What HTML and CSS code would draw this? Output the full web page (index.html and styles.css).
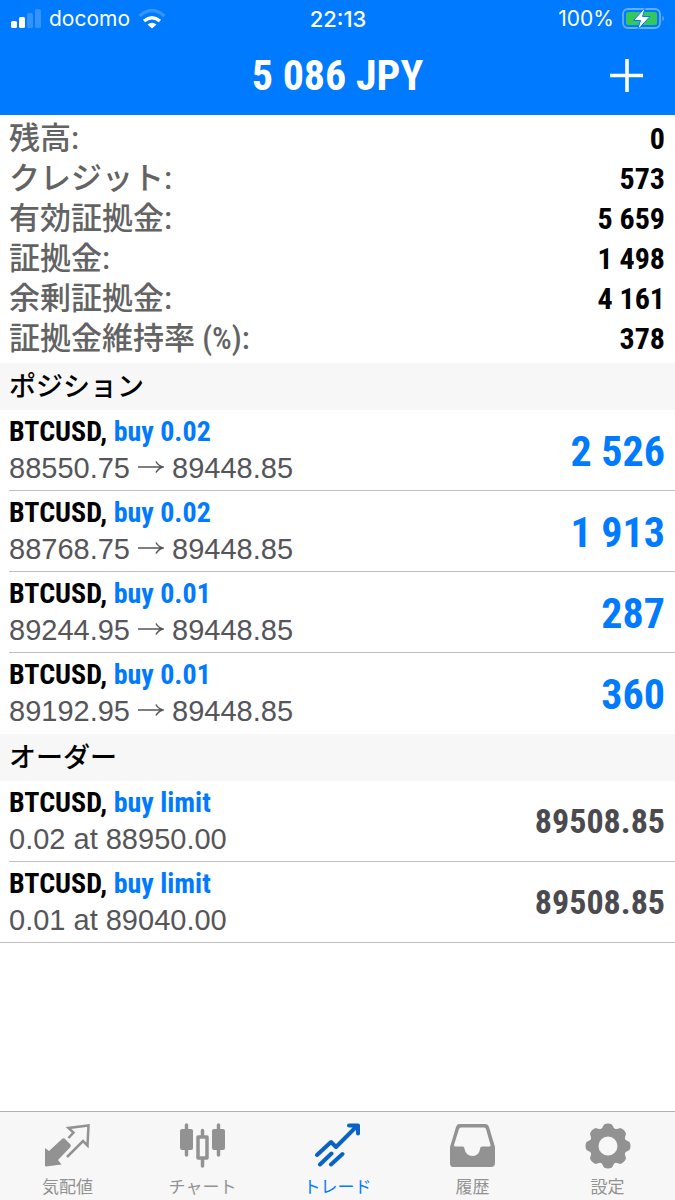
FILE: index.html
```html
<!DOCTYPE html>
<html lang="ja">
<head>
<meta charset="UTF-8" />
<meta name="viewport" content="width=device-width, initial-scale=1" />
<title>トレード</title>
<link rel="stylesheet" href="styles.css">
</head>
<body>

<header class="header">
  <div class="statusbar">
    <div class="carrier">
      <svg width="30" height="20" viewBox="0 0 30 20" fill="#fff">
        <rect x="0" y="12" width="6" height="7" rx="1.5"/>
        <rect x="8" y="8" width="6" height="11" rx="1.5"/>
        <rect x="16" y="4" width="6" height="15" rx="1.5" opacity=".2"/>
        <rect x="24" y="0" width="6" height="19" rx="1.5" opacity=".2"/>
      </svg>
      <span>docomo</span>
      <svg width="28" height="20" viewBox="0 0 28 20" fill="none" stroke="#fff">
        <path d="M1.500 7Q14 -4 26.500 7" stroke-width="3.500" opacity=".2"/>
        <path d="M6 12Q14 5.500 22 12" stroke-width="3.500"/>
        <path d="M14 19.500L9.500 15.500Q14 12 18.500 15.500Z" fill="#fff" stroke="none"/>
      </svg>
    </div>
    <time class="clock">22:13</time>
    <div class="battery">
      <span>100%</span>
      <svg width="43" height="24" viewBox="0 0 43 24">
        <rect x="1" y="2" width="37" height="19" rx="5" fill="none" stroke="#fff" stroke-width="1.800" opacity=".4"/>
        <rect x="4" y="5" width="31" height="13" rx="2.500" fill="#34c759"/>
        <path d="M40.500 8.500q2.500 3 0 6z" fill="#fff" opacity=".45"/>
        <path d="M23.500 0L11.500 13.500H18.500L15.500 23L28 9.500H20.500Z" fill="#fff" stroke="#007aff" stroke-width="1" stroke-linejoin="round"/>
      </svg>
    </div>
  </div>
  <div class="titlebar">
    <h1 class="title">5 086 JPY</h1>
    <button class="add" type="button" aria-label="新規注文">
      <svg width="34" height="34" viewBox="0 0 34 34"><path d="M17 0V33M0 16.500H33" stroke="#fff" stroke-width="3.600"/></svg>
    </button>
  </div>
</header>

<main class="content">
  <dl class="summary">
    <div class="line"><dt>残高:</dt><dd>0</dd></div>
    <div class="line"><dt>クレジット:</dt><dd>573</dd></div>
    <div class="line"><dt>有効証拠金:</dt><dd>5 659</dd></div>
    <div class="line"><dt>証拠金:</dt><dd>1 498</dd></div>
    <div class="line"><dt>余剰証拠金:</dt><dd>4 161</dd></div>
    <div class="line"><dt>証拠金維持率 (%):</dt><dd>378</dd></div>
  </dl>

  <h2 class="section">ポジション</h2>
  <ul class="list">
    <li class="row">
      <div>
        <p class="symbol">BTCUSD, <span class="side">buy 0.02</span></p>
        <p class="price">88550.75 <svg class="arrow" viewBox="0 0 26 14"><path d="M0 7H25M18 1.500Q20 5.500 25 7Q20 8.500 18 12.500"/></svg> 89448.85</p>
      </div>
      <span class="profit">2 526</span>
    </li>
    <li class="row">
      <div>
        <p class="symbol">BTCUSD, <span class="side">buy 0.02</span></p>
        <p class="price">88768.75 <svg class="arrow" viewBox="0 0 26 14"><path d="M0 7H25M18 1.500Q20 5.500 25 7Q20 8.500 18 12.500"/></svg> 89448.85</p>
      </div>
      <span class="profit">1 913</span>
    </li>
    <li class="row">
      <div>
        <p class="symbol">BTCUSD, <span class="side">buy 0.01</span></p>
        <p class="price">89244.95 <svg class="arrow" viewBox="0 0 26 14"><path d="M0 7H25M18 1.500Q20 5.500 25 7Q20 8.500 18 12.500"/></svg> 89448.85</p>
      </div>
      <span class="profit">287</span>
    </li>
    <li class="row">
      <div>
        <p class="symbol">BTCUSD, <span class="side">buy 0.01</span></p>
        <p class="price">89192.95 <svg class="arrow" viewBox="0 0 26 14"><path d="M0 7H25M18 1.500Q20 5.500 25 7Q20 8.500 18 12.500"/></svg> 89448.85</p>
      </div>
      <span class="profit">360</span>
    </li>
  </ul>

  <h2 class="section">オーダー</h2>
  <ul class="list orders">
    <li class="row">
      <div>
        <p class="symbol">BTCUSD, <span class="side">buy limit</span></p>
        <p class="price">0.02 at 88950.00</p>
      </div>
      <span class="quote">89508.85</span>
    </li>
    <li class="row">
      <div>
        <p class="symbol">BTCUSD, <span class="side">buy limit</span></p>
        <p class="price">0.01 at 89040.00</p>
      </div>
      <span class="quote">89508.85</span>
    </li>
  </ul>
</main>

<nav class="tabs">
  <a class="tab" href="#quotes">
    <svg width="46" height="46" viewBox="1 0 46 46">
      <path d="M1 43V25L5 28L18 16Q19.500 14.500 21 16L26.500 21.500Q27.500 23 26 24.500L14 37L17.500 41.500L2 43.500Z" fill="currentColor"/>
      <path d="M24.500 15L29.500 9.500L24.500 5L44.500 2.500L43.500 22.500L39 18L23 34" fill="none" stroke="currentColor" stroke-width="2.500"/>
    </svg>
    <span>気配値</span>
  </a>
  <a class="tab" href="#chart">
    <svg width="46" height="46" viewBox="1 0 46 46">
      <path d="M7.500 2V32M39.500 2V32M23.500 7.500V14M23.500 36V43" stroke="currentColor" stroke-width="3.500" stroke-linecap="round"/>
      <rect x="1" y="6" width="13" height="21" rx="2" fill="currentColor"/>
      <rect x="33" y="6" width="13" height="21" rx="2" fill="currentColor"/>
      <rect x="19" y="14" width="9" height="21" fill="#f7f7f7" stroke="currentColor" stroke-width="3.500" stroke-linejoin="round"/>
    </svg>
    <span>チャート</span>
  </a>
  <a class="tab active" href="#trade">
    <svg width="46" height="46" viewBox="1 0 46 46" fill="none" stroke="#0863c5" stroke-width="4" stroke-linecap="round" stroke-linejoin="round">
      <path d="M3 32L17 19L22 24L43 3M35 2.500H44V10.500M6 41.500L17.500 30.500M17 41.500L28.500 31"/>
    </svg>
    <span>トレード</span>
  </a>
  <a class="tab" href="#history">
    <svg width="46" height="46" viewBox="1 0 46 46">
      <path d="M10 1H36Q39 1 40 4L46 24V40Q46 44 42 44H4Q1 44 1 40V24L7 4Q8 1 10 1ZM12 4.500Q10.500 4.500 10 6L5 22Q5 23.500 6.500 23.500H14Q15.500 23.500 15.500 26Q17 33 23.500 33Q30 33 31 26Q31 23.500 33 23.500H40Q42 23.500 41.500 22L37 6Q36.500 4.500 35 4.500Z" fill="currentColor" fill-rule="evenodd"/>
    </svg>
    <span>履歴</span>
  </a>
  <a class="tab" href="#settings">
    <svg width="46" height="46" viewBox="0 0 46 46">
      <circle cx="23" cy="23" r="14" fill="none" stroke="currentColor" stroke-width="9"/>
      <g fill="currentColor">
        <path id="teeth" d="M16 7L19 1.500Q23 -.500 27 1.500L30 7ZM16 39L19 44.500Q23 46.500 27 44.500L30 39ZM7 16L1.500 19Q-.500 23 1.500 27L7 30ZM39 16L44.500 19Q46.500 23 44.500 27L39 30Z"/>
        <use href="#teeth" transform="rotate(45 23 23)"/>
      </g>
    </svg>
    <span>設定</span>
  </a>
</nav>

</body>
</html>
```

FILE: styles.css
```css
* {
  box-sizing: border-box;
}
body {
  margin: 0;
  min-height: 100vh;
  display: flex;
  flex-direction: column;
  background: #fff;
  color: #000;
  font-family: "Liberation Sans", "Noto Sans CJK JP", sans-serif;
}
h1, h2, p, dl, dd, ul {
  margin: 0;
  padding: 0;
}
svg {
  display: block;
}
.header {
  background: #007aff;
  color: #fff;
}
.statusbar {
  display: grid;
  grid-template-columns: 1fr auto 1fr;
  align-items: center;
  height: 37px;
  padding: 0 10px 0 11px;
  font: 21px/28px Inter, sans-serif;
}
.carrier, .battery {
  display: flex;
  align-items: center;
  gap: 8px;
}
.battery {
  justify-content: flex-end;
}
.clock {
  font-size: 22px;
  font-weight: 500;
}
.titlebar {
  display: grid;
  grid-template-columns: 1fr auto 1fr;
  align-items: center;
  height: 78px;
  padding: 0 31px;
}
.title {
  grid-column: 2;
  font: bold 42px/50px "Liberation Sans Narrow", "Roboto Condensed", "Liberation Sans", sans-serif;
}
.add {
  justify-self: end;
  padding: 0;
  border: none;
  background: none;
  cursor: pointer;
}
.content {
  flex: 1;
}
.summary {
  padding: 4px 10px 4px 9px;
}
.line {
  display: flex;
  justify-content: space-between;
  font: bold 30px/40px "Liberation Sans Narrow", "Roboto Condensed", "Liberation Sans", "Noto Sans CJK JP", sans-serif;
}
.line dt {
  color: #636363;
  font-size: 31px;
  font-weight: 500;
}
.section {
  padding: 0 9px 3px;
  background: #f7f7f7;
  font: 500 27px/44px "Noto Sans CJK JP", sans-serif;
}
.list {
  list-style: none;
}
.row {
  display: flex;
  align-items: center;
  justify-content: space-between;
  height: 81px;
  margin-left: 9px;
  padding-right: 10px;
  border-bottom: 1px solid #c0c0c0;
}
.row:last-child {
  border-color: transparent;
}
.orders .row:last-child {
  margin-left: 0;
  padding-left: 9px;
  border-color: #c0c0c0;
}
.symbol {
  font: bold 28px/36px "Liberation Sans Narrow", "Roboto Condensed", "Liberation Sans", sans-serif;
}
.side {
  color: #007aff;
}
.price {
  color: #55555a;
  font-size: 29px;
  line-height: 36px;
}
.arrow {
  display: inline-block;
  width: 26px;
  height: 14px;
  vertical-align: 4px;
  fill: none;
  stroke: #55555a;
  stroke-width: 1.5px;
}
.profit {
  padding-top: 4px;
  color: #007aff;
  font: bold 42px/50px "Liberation Sans Narrow", "Roboto Condensed", "Liberation Sans", sans-serif;
}
.quote {
  color: #4a4a4f;
  font: bold 34px/44px "Liberation Sans Narrow", "Roboto Condensed", "Liberation Sans", sans-serif;
}
.tabs {
  display: grid;
  grid-template-columns: repeat(5, 1fr);
  height: 89px;
  padding-top: 11px;
  border-top: 1px solid #b2b2b2;
  background: #f7f7f7;
}
.tab {
  display: flex;
  flex-direction: column;
  align-items: center;
  gap: 5px;
  color: #929292;
  font: 17px/24px "Noto Sans CJK JP", sans-serif;
  text-decoration: none;
}
.tab.active {
  color: #007aff;
}
```
